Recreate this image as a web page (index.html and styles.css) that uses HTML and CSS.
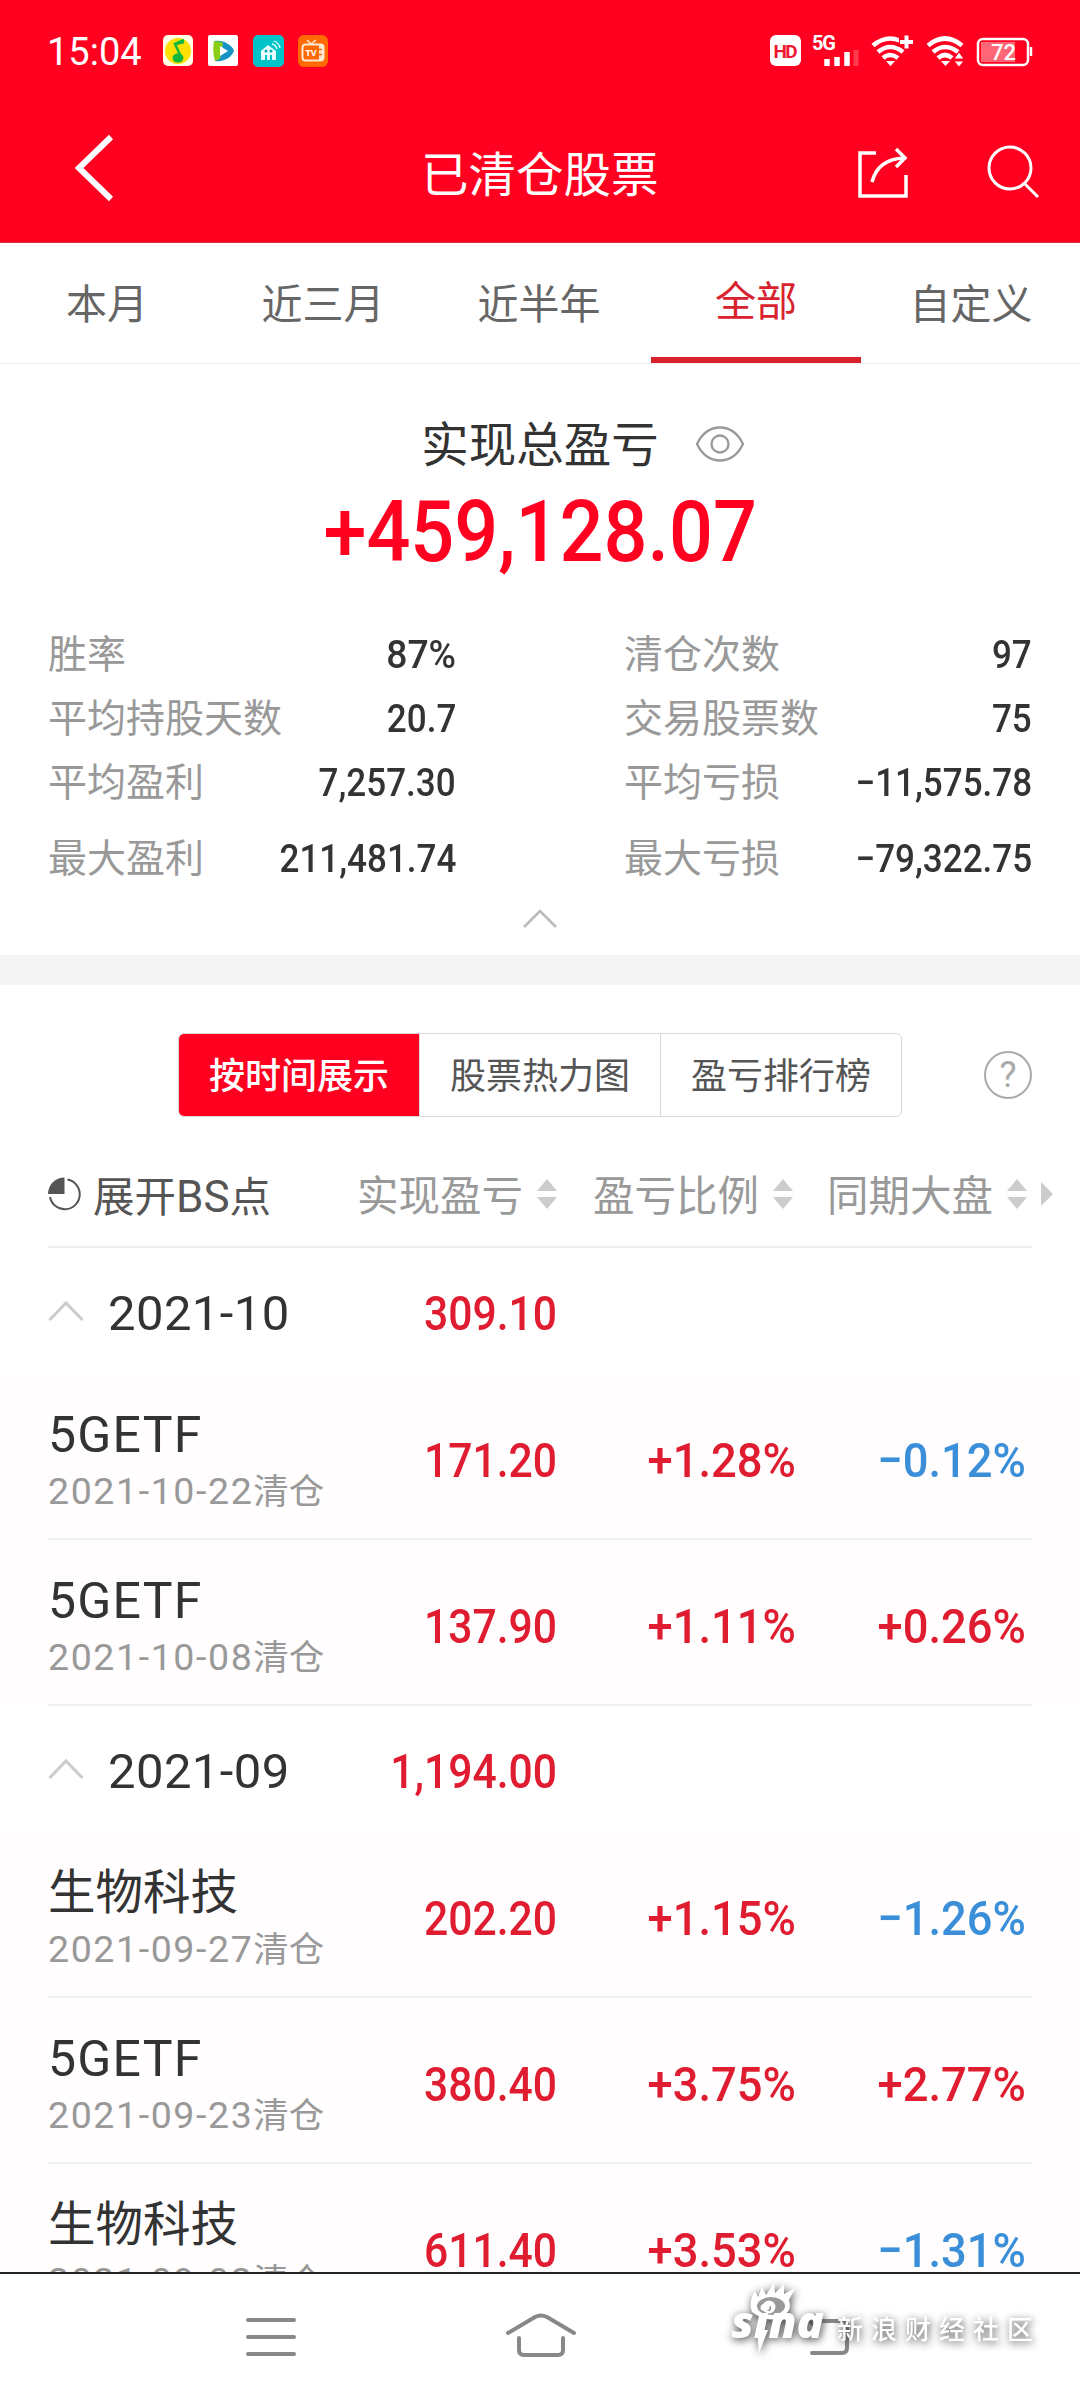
FILE: index.html
```html
<!DOCTYPE html>
<html lang="zh-CN">
<head>
<meta charset="utf-8">
<title>已清仓股票</title>
<link rel="stylesheet" href="styles.css">
</head>
<body>
<div class="screen">
  <header class="top">
    <div class="status">
      <span class="clock">15:04</span>
      <svg class="apps" width="166" height="32" viewBox="0 0 166 32">
        <rect width="30" height="31" rx="5" fill="#fffde8"/><circle cx="15" cy="16" r="13" fill="#ffe000"/>
        <ellipse cx="15" cy="23" rx="5.500" ry="4.500" fill="#10b83c"/><path d="M18 22 12 9l9-4M13 9l8-2" fill="none" stroke="#10b83c" stroke-width="2.600"/>
        <rect x="45" width="30" height="31" rx="2" fill="#fff"/><path d="M51 6q8-1 14 3 5 3 6 7-3 7-10 9-5 2-9 1z" fill="#1893c8"/><path d="M51 6q5 0 9 2l-3 16-5 2q-3-10-1-20z" fill="#8ace18"/><path d="M57 11l8 5-8 5z" fill="#fff"/>
        <rect x="90" width="31" height="32" rx="5" fill="#00c4c8"/><path d="M98 25V16l7-6 8 6v9h-4v-5h-2v5h-3v-5h-2v5z" fill="#e8ffff"/><circle cx="103" cy="16" r="1.500" fill="#00a8b0"/><circle cx="108" cy="16" r="1.500" fill="#00a8b0"/><path d="M109 9q4 1 5 5M111 6q5 2 6 7" fill="none" stroke="#e8ffff" stroke-width="1.300"/>
        <rect x="135" width="30" height="32" rx="6" fill="#ff6a00"/><rect x="139.500" y="9.500" width="21" height="16" rx="3" fill="none" stroke="#ffe9d6" stroke-width="2"/><path d="M144 5l4 4 5-4" fill="none" stroke="#ffe9d6" stroke-width="1.600"/><path d="M156 10h4v15h-4z" fill="#ffe9d6"/><path d="M156 14.500h3M156 19.500h3" stroke="#ff6a00" stroke-width="1.500"/><text x="142.500" y="20.500" class="tv" textLength="11">TV</text>
      </svg>
      <svg class="signals" width="264" height="34" viewBox="0 0 264 34">
        <rect y="1" width="31" height="31" rx="6" fill="#fff"/><text x="3.500" y="23.500" class="hd" textLength="24">HD</text>
        <text x="42" y="16" class="fiveg" textLength="24">5G</text>
        <path d="M57 32v-7M67 32V23M77 32V18" stroke="#fff" stroke-width="5.500"/><path d="M86 32V16" stroke="#ff3a4c" stroke-width="5"/>
        <g fill="none" stroke="#fff" stroke-width="4.600"><path d="M103 11.500q17-14 35 0M108 18q12-10 25 0M113 24q7-6 15 0"/><path d="M129 8h15M137 0v14" stroke="#ff0020" stroke-width="8"/><path d="M130 8h13M136.500 1.500v13" stroke-width="4"/><path d="M158 11.500q17-14 34 0M163 18q12-10 25 0M168 24q7-6 14 0"/></g>
        <path d="M116 27h9l-4.500 5zM171 27h9l-4.500 5z" fill="#fff"/><path d="M184 25h10l-5-7zM184 27h10l-5 6z" fill="#fff" stroke="#ff0020"/>
        <rect x="208" y="5" width="50" height="26" rx="5" fill="none" stroke="#fff" stroke-width="2.500"/><rect x="211" y="8" width="34" height="20" fill="#ff6676"/><path d="M261 13v9" stroke="#fff" stroke-width="2.500"/><text x="221" y="26" class="bat">72</text>
      </svg>
    </div>
    <div class="titlebar">
      <svg class="back" width="44" height="70" viewBox="0 0 44 70"><path d="M38 4 6 35 38 66" fill="none" stroke="#fff" stroke-width="6"/></svg>
      <h1>已清仓股票</h1>
      <svg class="share" width="52" height="54" viewBox="0 0 52 54" fill="none" stroke="#fff" stroke-width="3.500"><path d="M19 8H3v43h46V30M15 37Q21 14 47 13M39 4l9 9-9 9"/></svg>
      <svg class="search" width="54" height="54" viewBox="0 0 54 54" fill="none" stroke="#fff" stroke-width="3"><circle cx="23" cy="23" r="21"/><path d="M37 38 51 52"/></svg>
    </div>
  </header>

  <nav class="tabs"><span>本月</span><span>近三月</span><span>近半年</span><span class="on">全部</span><span>自定义</span></nav>

  <section class="summary">
    <div class="caption"><span>实现总盈亏</span><svg width="50" height="36" viewBox="0 0 50 36" fill="none" stroke="#999" stroke-width="2.300"><path d="M2 18Q10 1.500 25 1.500T48 18Q40 34.500 25 34.500T2 18z"/><circle cx="25" cy="18" r="8.500"/></svg></div>
    <div class="total"><span>+459,128.07</span></div>
    <div class="stats">
      <dl><dt>胜率</dt><dd class="wide">87%</dd></dl><dl><dt>清仓次数</dt><dd>97</dd></dl>
      <dl><dt>平均持股天数</dt><dd>20.7</dd></dl><dl><dt>交易股票数</dt><dd>75</dd></dl>
      <dl><dt>平均盈利</dt><dd>7,257.30</dd></dl><dl><dt>平均亏损</dt><dd>−11,575.78</dd></dl>
      <dl><dt>最大盈利</dt><dd>211,481.74</dd></dl><dl><dt>最大亏损</dt><dd>−79,322.75</dd></dl>
    </div>
    <svg class="fold" width="36" height="21" viewBox="0 0 36 21"><path d="M2 19 18 3 34 19" fill="none" stroke="#bbb" stroke-width="2.500"/></svg>
  </section>

  <section class="views">
    <div class="segments"><span class="on">按时间展示</span><span>股票热力图</span><span>盈亏排行榜</span></div>
    <span class="help">?</span>
  </section>

  <div class="colhead">
    <svg width="34" height="36" viewBox="0 0 34 36"><path d="M16.500 1.500V18H0A16.500 16.500 0 0 1 16.500 1.500z" fill="#555"/><path d="M19.500 3.500A15 15 0 1 1 2 21" fill="none" stroke="#555" stroke-width="2"/></svg>
    <span class="expand">展开<span class="latin">BS</span>点</span>
    <span class="col c1">实现盈亏</span><i class="sort"></i>
    <span class="col c2">盈亏比例</span><i class="sort"></i>
    <span class="col c3">同期大盘</span><i class="sort"></i>
    <i class="more"></i>
  </div>

  <main class="list">
    <div class="group"><svg width="36" height="22" viewBox="0 0 36 22"><path d="M1.500 20 18 3 34.500 20" fill="none" stroke="#ccc" stroke-width="3"/></svg><b>2021-10</b><em class="up">309.10</em></div>
    <div class="item"><div><h2 class="latin">5GETF</h2><p>2021-10-22<small>清仓</small></p></div><em class="up">171.20</em><em class="up wide">+1.28%</em><em class="down wide">−0.12%</em></div>
    <div class="item"><div><h2 class="latin">5GETF</h2><p>2021-10-08<small>清仓</small></p></div><em class="up">137.90</em><em class="up wide">+1.11%</em><em class="up wide">+0.26%</em></div>
    <div class="group"><svg width="36" height="22" viewBox="0 0 36 22"><path d="M1.500 20 18 3 34.500 20" fill="none" stroke="#ccc" stroke-width="3"/></svg><b>2021-09</b><em class="up">1,194.00</em></div>
    <div class="item"><div><h2>生物科技</h2><p>2021-09-27<small>清仓</small></p></div><em class="up">202.20</em><em class="up wide">+1.15%</em><em class="down wide">−1.26%</em></div>
    <div class="item"><div><h2 class="latin">5GETF</h2><p>2021-09-23<small>清仓</small></p></div><em class="up">380.40</em><em class="up wide">+3.75%</em><em class="up wide">+2.77%</em></div>
    <div class="item"><div><h2>生物科技</h2><p>2021-09-02<small>清仓</small></p></div><em class="up">611.40</em><em class="up wide">+3.53%</em><em class="down wide">−1.31%</em></div>
  </main>

  <footer class="navbar">
    <svg width="54" height="42" viewBox="0 0 54 42" fill="none" stroke="#888" stroke-width="4" stroke-linecap="round"><path d="M4 4h46M4 21h46M4 38h46"/></svg>
    <svg width="74" height="48" viewBox="0 0 74 48" fill="none" stroke="#888" stroke-width="4" stroke-linecap="round"><path d="M4 22 31 6q6-3 12 0L70 22M15 27v12q0 5 5 5h34q5 0 5-5V27"/></svg>
    <svg width="54" height="46" viewBox="0 0 54 46" fill="none" stroke="#888" stroke-width="4" stroke-linecap="round"><path d="M10 9h29q5 0 5 5v22q0 5-5 5H9"/><path d="M12 2 3 9l9 7z" fill="#888" stroke="none"/></svg>
    <div class="watermark">
      <svg width="104" height="80" viewBox="0 0 104 80"><path d="M24 32Q20 21 27 11l3 6 4-10 4 8 8-12 1 10 9-9v10l11-6-6 12q3 9-3 14Q42 46 24 32z" fill="#fff"/><ellipse cx="43" cy="26" rx="14" ry="9" fill="#999"/><circle cx="41" cy="27" r="6.500" fill="#fff"/><circle cx="40" cy="28" r="3" fill="#888"/><text x="3" y="58" class="sina" textLength="93" lengthAdjust="spacingAndGlyphs">sina</text><path d="M29 50h11L31 73z" fill="#fff"/></svg>
      <span>新浪财经社区</span>
    </div>
  </footer>
</div>
</body>
</html>
```
FILE: styles.css
```css
* { box-sizing: border-box; }
body { margin: 0; background: #fff; }
.screen { width: 1080px; height: 2400px; overflow: hidden; display: flex; flex-direction: column; font-family: Roboto, "Noto Sans CJK SC", sans-serif; color: #333; line-height: 1; }
h1, h2, p, dl, dd { margin: 0; font-weight: 400; }
em, i { font-style: normal; }

.top { height: 243px; background: #ff0020; color: #fff; border-bottom: 1px solid #d8303c; flex: none; }
.status { height: 102px; display: flex; align-items: center; padding: 0 46px 0 47px; }
.clock { font-size: 38px; width: 116px; padding-top: 2px; }
.signals { margin-left: auto; }
.tv { font: 700 9px "Open Sans", sans-serif; fill: #fff; }
.hd { font: 700 19px Roboto, sans-serif; fill: #f01830; }
.fiveg { font: 700 20px Roboto, sans-serif; fill: #fff; }
.bat { font: 500 22px Roboto, sans-serif; fill: #fff; }
.titlebar { display: flex; align-items: center; height: 140px; padding: 0 38px 0 73px; }
.back { margin-top: -8px; }
h1 { font: 400 47.500px/60px "Noto Sans CJK SC", sans-serif; width: 238px; margin: 0 0 0 304px; white-space: nowrap; }
.share { margin-left: 198px; }
.search { margin-left: 78px; }

.tabs { display: grid; grid-template-columns: repeat(5, 1fr); height: 121px; border-bottom: 1px solid #eee; flex: none; }
.tabs span { font-size: 41px; color: #666; text-align: center; line-height: 125px; height: 120px; margin-left: -2px; }
.tabs .on { color: #d8232f; border-bottom: 6px solid #d8232f; line-height: 119px; width: 210px; justify-self: center; margin-left: 0; }

.summary { height: 591px; padding-top: 50px; flex: none; display: flex; flex-direction: column; align-items: center; }
.caption { display: flex; align-items: center; font-size: 47.500px; height: 62px; padding-left: 86px; }
.caption span { padding-top: 4px; }
.caption svg { margin: -2px 0 0 36px; }
.total { font-size: 85px; font-weight: 500; color: #ff0020; height: 110px; line-height: 113px; }
.total span { display: block; transform: scaleX(.91); }
.stats { width: 984px; display: grid; grid-template-columns: 408px 408px; justify-content: space-between; grid-template-rows: 64px 64px 76px 64px; padding-top: 37px; }
.stats dl { display: flex; justify-content: space-between; font-size: 39px; line-height: 64px; height: 64px; }
dt { color: #999; }
dd { font-size: 38.500px; font-weight: 500; transform: scaleX(.91); transform-origin: right; }
dd.wide { transform: scaleX(.97); }
.fold { margin-top: 17px; }

.views { border-top: 30px solid #f5f5f5; height: 180px; padding: 48px 48px 0 178px; display: flex; align-items: flex-start; justify-content: space-between; flex: none; }
.segments { display: grid; grid-template-columns: 240px 241px 241px; height: 84px; border: 1px solid #d8d8d8; border-radius: 6px; overflow: hidden; }
.segments span { font-size: 36px; line-height: 86px; text-align: center; color: #555; border-left: 1px solid #d8d8d8; }
.segments .on { background: #ff0020; color: #fff; font-weight: 500; border: 0; }
.help { width: 48px; height: 48px; border: 2.500px solid #aaa; border-radius: 50%; font-size: 36px; line-height: 45px; text-align: center; color: #aaa; margin-top: 18px; }

.colhead { display: flex; align-items: center; height: 113px; margin: 0 27px 0 0; padding: 7px 0 0 48px; flex: none; font-size: 41.500px; background: linear-gradient(#eee, #eee) 48px 100% / 984px 2px no-repeat; }
.colhead > svg, .sort, .more { position: relative; top: -1px; }
.expand { width: 187px; margin-left: 11px; padding-top: 3px; color: #555; white-space: nowrap; }
.expand .latin { font-size: 44px; }
.col { color: #999; padding-top: 3px; width: 166px; white-space: nowrap; }
.c1 { margin-left: 77px; }
.c2 { margin-left: 36px; }
.c3 { margin-left: 34px; }
.sort { width: 20px; height: 30px; margin-left: 14px; background: #ccc; clip-path: polygon(50% 0, 100% 40%, 0 40%, 0 60%, 100% 60%, 50% 100%, 0 60%, 0 40%); }
.more { border: 12px solid transparent; border-left-color: #ccc; border-right: 0; margin-left: auto; }

.list { flex: 1; overflow: hidden; min-height: 0; }
.group { height: 126px; display: grid; grid-template-columns: 60px 1fr 200px; width: 509px; margin-left: 48px; align-items: center; padding-top: 4px; }
.group svg { margin-top: -4px; }
.group b { font-weight: 400; font-size: 49px; letter-spacing: .400px; }
.list em { font-size: 49px; font-weight: 500; text-align: right; transform: scaleX(.87); transform-origin: right; }
.list em.wide { transform: scaleX(.925); }
.up { color: #e01c30; }
.down { color: #3a8fd8; }
.item { height: 166px; background: #fffdfd linear-gradient(#f0f0f0, #f0f0f0) 48px 100% / 984px 2px no-repeat; display: grid; grid-template-columns: 309px 200px 239px 230px; padding: 7px 0 0 48px; align-items: center; }
.item > div { padding-top: 2px; }
h2 { font-size: 47.500px; line-height: 60px; white-space: nowrap; }
h2.latin { font-size: 50px; letter-spacing: 1.200px; }
p { font-size: 37.500px; line-height: 52px; color: #999; letter-spacing: 1.600px; white-space: nowrap; }
small { font-size: 35.500px; letter-spacing: 0; }

.navbar { position: relative; height: 128px; border-top: 2px solid #222; background: #fff; display: flex; flex: none; }
.navbar > svg { margin-top: 42px; }
.navbar > svg:nth-child(1) { margin-left: 244px; }
.navbar > svg:nth-child(2) { margin: 37px 0 0 206px; }
.navbar > svg:nth-child(3) { margin: 38px 0 0 225px; }
.watermark { position: absolute; left: 728px; top: 6px; display: flex; align-items: center; filter: drop-shadow(1px 2px 4px #444); color: #fff; }
.watermark span { font: 500 26px/40px "Noto Sans CJK SC", sans-serif; letter-spacing: 8px; margin: 16px 0 0 5px; white-space: nowrap; }
.sina { font: italic 800 45px "Open Sans", sans-serif; fill: #fff; }
```
